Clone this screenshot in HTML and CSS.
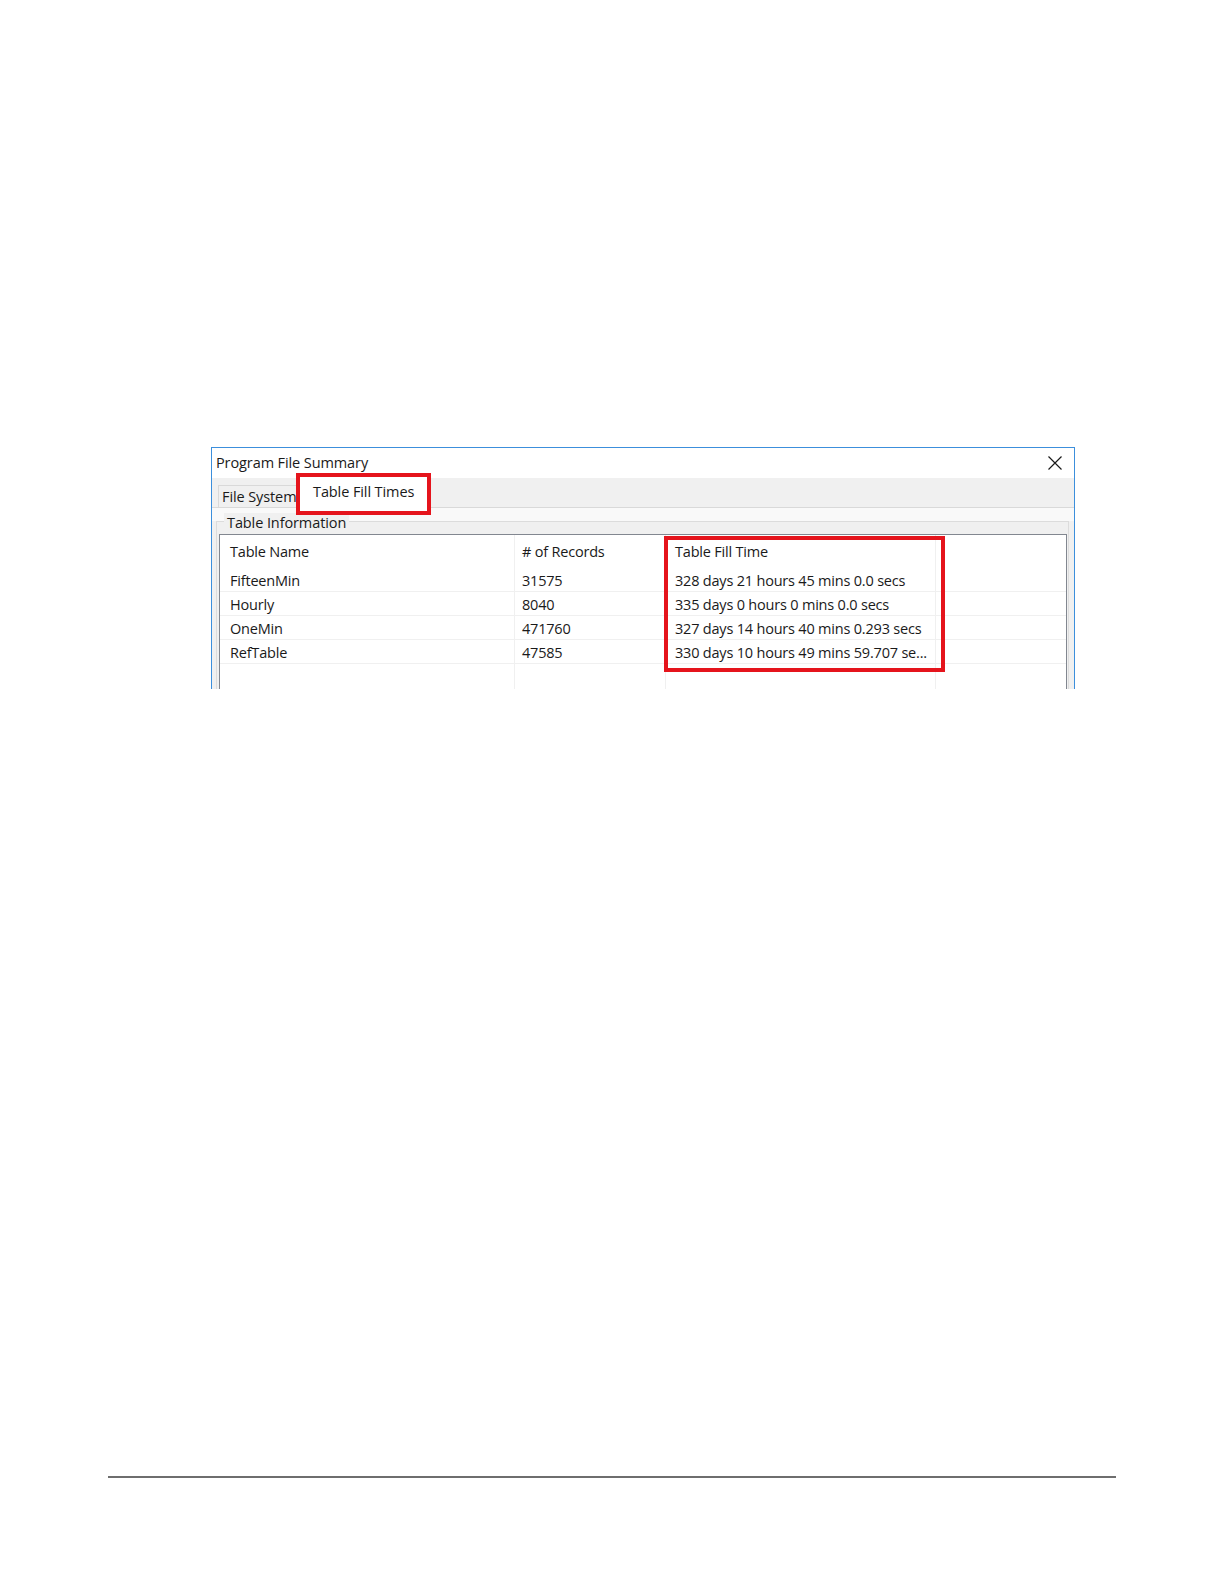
FILE: index.html
```html
<!DOCTYPE html>
<html>
<head>
<meta charset="utf-8">
<title>Program File Summary</title>
<link rel="stylesheet" href="styles.css">
</head>
<body>
<div class="page">
  <div class="window">
    <div class="titlebar">
      <span class="title">Program File Summary</span>
      <svg class="close" width="14" height="14" viewBox="0 0 14 14"><path d="M0.5 0.5 L13.5 13.5 M13.5 0.5 L0.5 13.5" stroke="#1a1a1a" stroke-width="1.2" fill="none"/></svg>
    </div>
    <div class="tabstrip">
      <div class="tab">File System</div>
      <div class="tab active">Table Fill Times</div>
    </div>
    <div class="tabpage">
      <div class="groupbox">
        <div class="legend">Table Information</div>
        <div class="listview">
          <div class="grid">
            <div class="row header">
              <div class="cell c1">Table Name</div>
              <div class="cell c2"># of Records</div>
              <div class="cell c3">Table Fill Time</div>
              <div class="cell c4"></div>
            </div>
            <div class="row">
              <div class="cell c1">FifteenMin</div>
              <div class="cell c2">31575</div>
              <div class="cell c3">328 days 21 hours 45 mins 0.0 secs</div>
              <div class="cell c4"></div>
            </div>
            <div class="row">
              <div class="cell c1">Hourly</div>
              <div class="cell c2">8040</div>
              <div class="cell c3">335 days 0 hours 0 mins 0.0 secs</div>
              <div class="cell c4"></div>
            </div>
            <div class="row">
              <div class="cell c1">OneMin</div>
              <div class="cell c2">471760</div>
              <div class="cell c3">327 days 14 hours 40 mins 0.293 secs</div>
              <div class="cell c4"></div>
            </div>
            <div class="row">
              <div class="cell c1">RefTable</div>
              <div class="cell c2">47585</div>
              <div class="cell c3">330 days 10 hours 49 mins 59.707 se...</div>
              <div class="cell c4"></div>
            </div>
            <div class="row empty">
              <div class="cell c1"></div>
              <div class="cell c2"></div>
              <div class="cell c3"></div>
              <div class="cell c4"></div>
            </div>
          </div>
          <div class="highlight"></div>
        </div>
      </div>
    </div>
  </div>
  <div class="footer-rule"></div>
</div>
</body>
</html>
```
FILE: styles.css
```css
html, body {
  margin: 0;
  padding: 0;
  background: #ffffff;
}

body {
  width: 1224px;
  height: 1584px;
  font-family: "Open Sans", "Noto Sans", "DejaVu Sans", sans-serif;
  color: #1a1a1a;
}

.page {
  padding-top: 447px;
}

.window {
  margin-left: 211px;
  width: 862px;
  height: 241px;
  border: 1px solid #3c8fdc;
  border-bottom: none;
  background: #f0f0f0;
  overflow: hidden;
  display: flex;
  flex-direction: column;
}

.titlebar {
  height: 30px;
  background: #ffffff;
  display: flex;
  align-items: center;
  justify-content: space-between;
  padding: 0 12px 0 4px;
  flex: none;
}

.title {
  font-size: 14.5px;
  letter-spacing: -0.1px;
  color: #1a1a1a;
  line-height: 20px;
}

.close {
  display: block;
}

.tabstrip {
  height: 29px;
  display: flex;
  align-items: flex-end;
  padding-left: 6px;
  flex: none;
  position: relative;
  z-index: 1;
}

.tab {
  font-size: 14.5px;
  letter-spacing: -0.1px;
  height: 22px;
  line-height: 21px;
  width: 82px;
  padding: 0 0 0 3px;
  box-sizing: border-box;
  border: 1px solid #d9d9d9;
  border-bottom: none;
  background: #f0f0f0;
  white-space: nowrap;
  overflow: hidden;
}

.tab.active {
  width: 127px;
  background: #ffffff;
  height: 34px;
  line-height: 30px;
  padding: 0 0 0 13px;
  margin-bottom: -4px;
  outline: 4px solid #e5141c;
  outline-offset: 0;
  border: none;
  overflow: visible;
}

.tabpage {
  flex: 1;
  border-top: 1px solid #d9d9d9;
  background: linear-gradient(#f9f9f9 0, #f9f9f9 13px, #f0f0f0 13px);
  padding: 13px 5px 0 4px;
}

.groupbox {
  position: relative;
  border: 1px solid #dcdcdc;
  border-bottom: none;
  background: #f0f0f0;
  padding: 12px 1px 0 2px;
  height: 200px;
}

.legend {
  position: absolute;
  left: 7px;
  top: -9px;
  font-size: 14.5px;
  letter-spacing: -0.1px;
  padding: 0 3px;
  background: #f0f0f0;
  line-height: 20px;
}

.listview {
  position: relative;
  background: #ffffff;
  border: 1px solid #828790;
  border-bottom: none;
  height: 200px;
  font-size: 14.5px;
  letter-spacing: -0.2px;
}

.grid {
  display: flex;
  flex-direction: column;
}

.row {
  display: grid;
  grid-template-columns: 295px 151px 270px 1fr;
  height: 24px;
  border-bottom: 1px solid #f0f0f0;
  box-sizing: border-box;
}

.row.header {
  height: 33px;
  border-bottom: none;
}

.row.empty {
  height: 40px;
  border-bottom: none;
}

.cell {
  padding: 1px 0 0 9px;
  line-height: 23px;
  white-space: nowrap;
  overflow: hidden;
  border-right: 1px solid #f0f0f0;
}

.row.header .cell {
  padding-top: 0;
  line-height: 33px;
}

.cell.c1 {
  padding-left: 10px;
}

.cell.c2 {
  padding-left: 7px;
}

.cell.c4 {
  border-right: none;
}

.highlight {
  position: absolute;
  left: 444px;
  top: 1px;
  width: 281px;
  height: 136px;
  box-sizing: border-box;
  border: 4px solid #e5141c;
  pointer-events: none;
}

.footer-rule {
  margin: 787px 0 0 108px;
  width: 1008px;
  height: 2px;
  background: #6e6e6e;
}
```
